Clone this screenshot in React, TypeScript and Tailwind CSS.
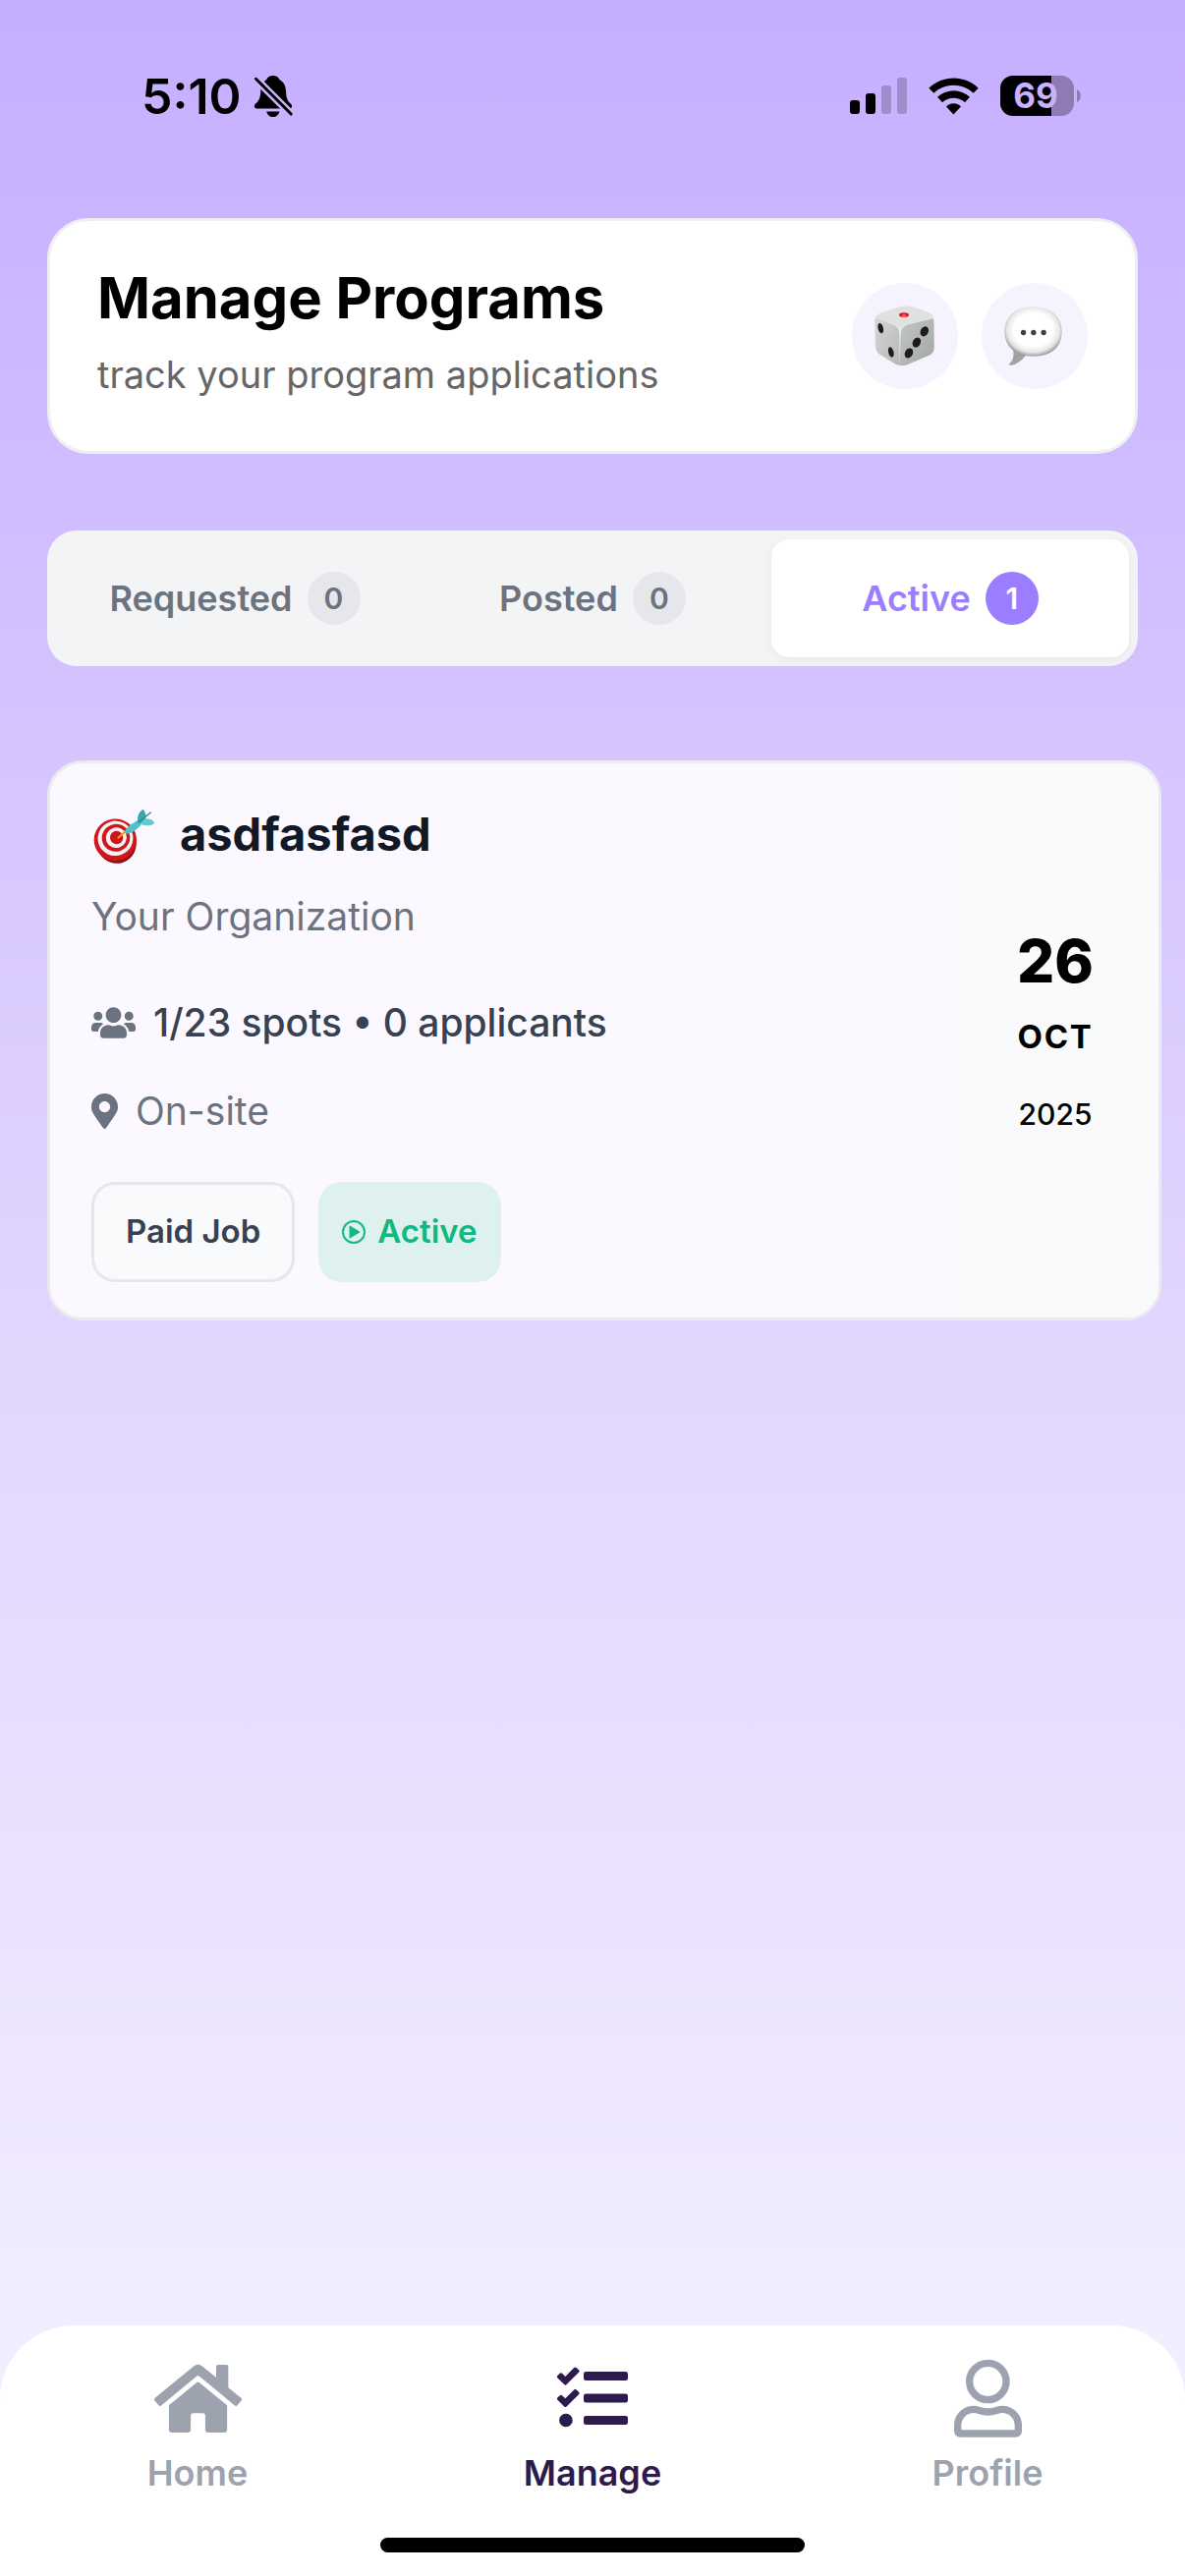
import React, { useState } from 'react';
import { FaHome, FaMapMarkerAlt, FaTasks, FaUsers } from 'react-icons/fa';

const BellSlashIcon: React.FC = () => (
  <svg viewBox="414 48 124 134" className="h-[44px] w-[41px]" aria-hidden="true">
    <path d="M474 51C464 51 457 56 454 63C442 70 437 80 436 95C435 120 431 128 420 138C414 145 415 153 424 153H524C534 153 535 145 529 138C518 128 515 120 514 98C513 80 506 70 494 63C491 56 484 51 474 51Z" />
    <path d="M454 162H494C492 172 484 179 474 179C464 179 456 172 454 162Z" />
    <path d="M413 53L540 180" stroke="#c8b1ff" strokeWidth="24" />
    <path d="M421 61L530 170" stroke="#000" strokeWidth="9" strokeLinecap="round" />
  </svg>
);

const SignalIcon: React.FC = () => (
  <svg viewBox="0 0 58 38" className="h-[38px] w-[58px]" aria-hidden="true">
    <rect x="0" y="23" width="10" height="14" rx="3" />
    <rect x="16" y="16" width="10" height="21" rx="3" />
    <rect x="32" y="8" width="10" height="29" rx="3" fillOpacity="0.2" />
    <rect x="48" y="0" width="10" height="37" rx="3" fillOpacity="0.2" />
  </svg>
);

const WifiIcon: React.FC = () => (
  <svg viewBox="315 56 153 113" className="h-[38px] w-[51px]" aria-hidden="true">
    <path d="M316 88C358 47 426 47 467 88L452 103C419 71 364 71 331 103Z" />
    <path d="M342 115C370 89 413 89 441 115L426 131C407 113 376 113 357 131Z" />
    <path d="M369 144C382 131 401 131 414 144L391 168Z" />
  </svg>
);

const BatteryIcon: React.FC = () => (
  <svg viewBox="0 0 83 42" className="h-[42px] w-[83px]" role="img" aria-label="Battery 69%">
    <defs>
      <clipPath id="battery-level">
        <rect x="0" y="0" width="52" height="42" />
      </clipPath>
    </defs>
    <rect x="0" y="0" width="75" height="41" rx="13" fill="#8f7bb3" />
    <rect x="0" y="0" width="75" height="41" rx="13" clipPath="url(#battery-level)" />
    <path d="M78 14C83 16 83 25 78 27Z" fill="#8f7bb3" />
    <text x="36" y="33" textAnchor="middle" fill="#c8b1ff" className="text-[35px] font-bold">
      69
    </text>
  </svg>
);

const DiceIcon: React.FC = () => (
  <svg viewBox="144 303 192 188" className="h-[62px] w-16" aria-hidden="true">
    <defs>
      <linearGradient id="dice-left" x1="0" y1="0" x2="1" y2="1">
        <stop offset="0" stopColor="#d5d6d5" />
        <stop offset="1" stopColor="#b5b8b5" />
      </linearGradient>
      <linearGradient id="dice-right" x1="0" y1="0" x2="1" y2="1">
        <stop offset="0" stopColor="#c3c6c3" />
        <stop offset="1" stopColor="#a4a8a5" />
      </linearGradient>
    </defs>
    <path d="M147 350C147 335 152 332 168 325L225 307C240 303 250 304 266 308L312 324C326 330 330 336 330 350V428C330 445 326 450 314 457L250 484C232 491 222 490 208 483L165 455C152 447 150 440 149 425Z" fill="#e6e8e6" />
    <path d="M147 348C148 342 154 342 164 346L204 362C217 367 221 376 222 390L224 487C217 487 212 485 206 481L165 455C152 447 150 440 149 425Z" fill="url(#dice-left)" />
    <path d="M329 348C327 342 322 344 314 346L252 361C236 365 228 374 227 390L224 487C232 489 242 487 250 484L314 457C326 450 330 445 330 428Z" fill="url(#dice-right)" />
    <path d="M152 341C156 332 162 328 170 325L225 307C240 303 250 304 266 308L312 324C320 328 324 333 325 341C290 353 270 352 250 358C236 361 230 368 226 374C221 365 215 362 204 358Z" fill="#dfe1df" />
    <ellipse cx="237" cy="332" rx="15" ry="7" fill="#e3151f" />
    <ellipse cx="237" cy="334" rx="7" ry="3" fill="#ff6a60" />
    <g fill="#1c1c1e">
      <ellipse cx="165" cy="373" rx="8" ry="16" transform="rotate(-14 165 373)" />
      <ellipse cx="197" cy="447" rx="8" ry="16" transform="rotate(-14 197 447)" />
      <ellipse cx="300" cy="383" rx="12" ry="16" transform="rotate(28 300 383)" />
      <ellipse cx="276" cy="417" rx="12" ry="16" transform="rotate(28 276 417)" />
      <ellipse cx="252" cy="450" rx="12" ry="16" transform="rotate(28 252 450)" />
    </g>
  </svg>
);

const SpeechBubbleIcon: React.FC = () => (
  <svg viewBox="543 303 191 187" className="h-[62px] w-16" aria-hidden="true">
    <defs>
      <radialGradient id="bubble-fill" cx="0.5" cy="0.46" r="0.56">
        <stop offset="0.6" stopColor="#fff" />
        <stop offset="0.82" stopColor="#e6e6e6" />
        <stop offset="1" stopColor="#8c8c8c" />
      </radialGradient>
    </defs>
    <path d="M572 438C576 458 573 470 562 480C558 485 561 487 568 486C587 482 602 468 612 455Z" fill="#a2a2a2" />
    <path d="M634 307C688 307 722 338 722 383C722 430 690 459 634 459C580 459 546 430 546 383C546 338 580 307 634 307Z" fill="url(#bubble-fill)" />
    <circle cx="604" cy="386" r="8" fill="#3f3f41" />
    <circle cx="635" cy="386" r="8" fill="#3f3f41" />
    <circle cx="666" cy="386" r="8" fill="#3f3f41" />
  </svg>
);

const TargetIcon: React.FC = () => (
  <svg viewBox="164 169 196 180" className="h-[60px] w-[66px]" aria-hidden="true">
    <g transform="rotate(-20 240 276)">
      <ellipse cx="236" cy="284" rx="61" ry="64" fill="#8d0f12" />
      <ellipse cx="236" cy="275" rx="65" ry="64" fill="#d3161c" />
      <ellipse cx="238" cy="271" rx="54" ry="53" fill="#f7f3f2" />
      <ellipse cx="240" cy="270" rx="43" ry="42" fill="#d3161c" />
      <ellipse cx="241" cy="270" rx="32" ry="31" fill="#f7f3f2" />
      <ellipse cx="242" cy="270" rx="20" ry="20" fill="#c9151b" />
    </g>
    <path d="M245 270L270 248" stroke="#e3a21a" strokeWidth="6" strokeLinecap="round" />
    <path d="M264 252C270 238 286 226 306 216L316 228C304 244 288 256 270 258Z" fill="#4fc3cb" />
    <path d="M304 218C303 202 309 190 321 183C328 190 331 200 328 214L314 228Z" fill="#3aa9b2" />
    <path d="M313 226L330 211C342 212 352 216 356 225C346 234 330 236 313 228Z" fill="#5bcdd3" />
    <path d="M306 224L344 193" stroke="#2b8c96" strokeWidth="4" strokeLinecap="round" />
  </svg>
);

const PlayCircleIcon: React.FC = () => (
  <svg viewBox="0 0 24 24" className="h-6 w-6" aria-hidden="true">
    <circle cx="12" cy="12" r="11" fill="none" stroke="currentColor" strokeWidth="2" />
    <path d="M8 6V18L18 12Z" fill="currentColor" stroke="currentColor" strokeLinejoin="round" />
  </svg>
);

const PersonIcon: React.FC = () => (
  <svg viewBox="450 153 213 243" className="h-[81px] w-[71px]" fill="none" stroke="currentColor" strokeWidth="22" aria-hidden="true">
    <circle cx="556" cy="222" r="56" />
    <path d="M464 373V356C464 329 486 307 513 307C526 307 536 315 556 315C577 315 587 307 600 307C627 307 649 329 649 356V373C649 378 646 381 641 381H472C467 381 464 378 464 373Z" />
  </svg>
);

const StatusBar: React.FC = () => (
  <div className="flex items-center justify-between pt-[72px] pr-[105px] pl-[144px]">
    <div className="flex h-[52px] items-center gap-3">
      <span className="text-[50px] leading-[52px] font-semibold">5:10</span>
      <BellSlashIcon />
    </div>
    <div className="flex h-[52px] items-center gap-[22px]">
      <SignalIcon />
      <WifiIcon />
      <BatteryIcon />
    </div>
  </div>
);

const tabs = [
  { name: 'Requested', count: 0 },
  { name: 'Posted', count: 0 },
  { name: 'Active', count: 1 },
];

const navItems = [
  { name: 'Home', icon: <FaHome className="h-[79px] w-[89px]" /> },
  { name: 'Manage', icon: <FaTasks className="h-[72px] w-[72px]" /> },
  { name: 'Profile', icon: <PersonIcon /> },
];

const ProgramCard: React.FC = () => (
  <article className="mt-24 -mr-6 flex overflow-hidden rounded-[36px] border-[3px] border-[#ebebed] bg-[#fbf9ff]">
    <div className="flex-1 px-[42px] pt-[42px] pb-9">
      <div className="flex h-[60px] items-center gap-6">
        <TargetIcon />
        <h2 className="text-[47px] leading-[60px] font-bold text-[#111827]">asdfasfasd</h2>
      </div>
      <p className="mt-[30px] text-[39px] leading-[48px] text-[#6b7280]">Your Organization</p>
      <div className="mt-[60px] flex items-center gap-[18px]">
        <FaUsers className="h-9 w-[45px] text-[#6b7280]" />
        <span className="text-[39px] leading-[48px] font-medium text-[#374151]">
          1/23 spots • 0 applicants
        </span>
      </div>
      <div className="mt-[42px] flex items-center gap-[18px] text-[#6b7280]">
        <FaMapMarkerAlt className="h-9 w-[27px]" />
        <span className="text-[39px] leading-[48px]">On-site</span>
      </div>
      <div className="mt-12 flex gap-6">
        <span className="flex h-[102px] items-center rounded-[24px] border-[3px] border-[#e5e7eb] bg-[#f9fafb] px-8 text-[33px] font-semibold text-[#374151]">
          Paid Job
        </span>
        <span className="flex h-[102px] items-center gap-3 rounded-[24px] bg-[#def1ee] px-6 text-[33px] font-semibold text-[#10b981]">
          <PlayCircleIcon />
          Active
        </span>
      </div>
    </div>
    <div className="flex w-[210px] flex-col items-center justify-center bg-[#f9fafc] pb-6">
      <span className="text-[60px] leading-[72px] font-extrabold">26</span>
      <span className="mt-5 text-[33px] leading-[42px] font-bold tracking-wider">OCT</span>
      <span className="mt-10 text-[30px] leading-9 font-medium">2025</span>
    </div>
  </article>
);

const App: React.FC = () => {
  const [activeTab, setActiveTab] = useState('Active');

  return (
    <div className="flex min-h-screen flex-col overflow-x-hidden bg-linear-to-b from-[#c6aeff] via-[#e1d4fe] to-[#f6f3ff] font-[Inter,sans-serif] text-black">
      <StatusBar />

      <main className="px-12 pt-[98px]">
        <header className="flex items-center justify-between rounded-[42px] border-[3px] border-[#efefef] bg-white px-12 py-[42px]">
          <div className="pb-3">
            <h1 className="text-[58px] leading-[72px] font-bold">Manage Programs</h1>
            <p className="mt-[18px] text-[38px] leading-[48px] text-[#666666]">
              track your program applications
            </p>
          </div>
          <div className="flex gap-6">
            <button type="button" aria-label="Random program" className="flex h-[108px] w-[108px] items-center justify-center rounded-full bg-[#f6f3ff]">
              <DiceIcon />
            </button>
            <button type="button" aria-label="Messages" className="flex h-[108px] w-[108px] items-center justify-center rounded-full bg-[#f6f3ff]">
              <SpeechBubbleIcon />
            </button>
          </div>
        </header>

        <div role="tablist" className="mt-[78px] grid grid-cols-3 rounded-[30px] bg-[#f3f4f6] p-[9px]">
          {tabs.map(({ name, count }) => {
            const active = name === activeTab;
            return (
              <button
                key={name}
                type="button"
                role="tab"
                aria-selected={active}
                onClick={() => setActiveTab(name)}
                className={`flex h-[120px] items-center justify-center gap-[15px] rounded-[18px] text-[36px] font-semibold ${
                  active ? 'bg-white text-[#9b7eff] shadow-[0_3px_12px_rgba(0,0,0,0.05)]' : 'text-[#6b7280]'
                }`}
              >
                {name}
                <span
                  className={`flex h-[54px] w-[54px] items-center justify-center rounded-full text-[30px] ${
                    active ? 'bg-[#9b7eff] text-white' : 'bg-[#e5e7eb]'
                  }`}
                >
                  {count}
                </span>
              </button>
            );
          })}
        </div>

        <ProgramCard />
      </main>

      <nav className="mt-auto rounded-t-[75px] bg-white pt-[34px] pb-6">
        <div className="grid grid-cols-3">
          {navItems.map(({ name, icon }) => (
            <a
              key={name}
              href={`#${name.toLowerCase()}`}
              className={`flex flex-col items-center gap-3 ${name === 'Manage' ? 'text-[#2d1b4e]' : 'text-[#9ca3af]'}`}
            >
              <span className="flex h-20 items-center">{icon}</span>
              <span className="text-[36px] leading-[48px] font-semibold">{name}</span>
            </a>
          ))}
        </div>
        <div className="mx-auto mt-[42px] h-[15px] w-[432px] rounded-full bg-black" />
      </nav>
    </div>
  );
};

export default App;
